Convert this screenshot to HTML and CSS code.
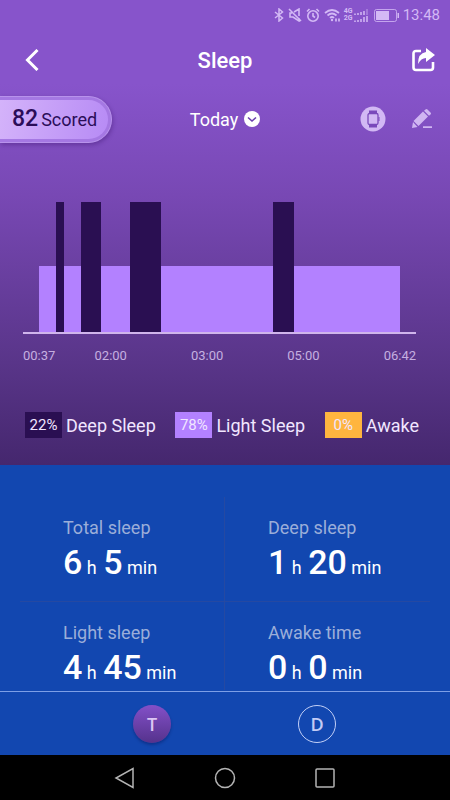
FILE: index.html
```html
<!DOCTYPE html>
<html lang="en">
<head>
    <meta charset="UTF-8">
    <meta name="viewport" content="width=device-width, initial-scale=1.0">
    <title>Sleep</title>
    <link rel="stylesheet" href="styles.css">
</head>
<body>
    <!-- Sleep summary -->
    <section class="summary">
        <div class="status-bar">
            <svg width="10" height="14" viewBox="0 0 10 14" fill="none" stroke="currentColor" stroke-width="1.5"><path d="M1 4l7.500 6L5 13V1l3.500 3L1 10"/></svg>
            <svg width="14" height="14" viewBox="0 0 14 14" fill="none" stroke="currentColor" stroke-width="1.6"><path d="M1 1l12 12M4 5H2v4h3l6 4v-3M6 4l5-3v7"/></svg>
            <svg width="14" height="14" viewBox="0 0 14 14" fill="none" stroke="currentColor" stroke-width="1.6"><circle cx="7" cy="8" r="5.2"/><path d="M7 5v3l2 1.5M1 3.5L3.5 1M13 3.5L10.500 1"/></svg>
            <svg width="16" height="14" viewBox="0 0 16 14" fill="none" stroke="currentColor" stroke-width="1.7"><path d="M1 5q7-6 14 0M3.500 7.500q4.500-4 9 0M6 10q2-2 4 0"/><circle cx="8" cy="12" r="1.200" fill="currentColor" stroke="none"/><path d="M12 10.500v3M15 10.500v3"/></svg>
            <div class="signals">
                <div class="signal">4G<svg width="14" height="6" viewBox="0 0 14 6" fill="none" stroke="currentColor" stroke-width="1.5"><path d="M1 6V4.500M4 6V4M7 6V3M10 6V2"/><path d="M13 6V0" opacity=".5"/></svg></div>
                <div class="signal">2G<svg width="14" height="6" viewBox="0 0 14 6" fill="none" stroke="currentColor" stroke-width="1.5"><path d="M1 6V4.500M4 6V4M7 6V3M10 6V1M13 6V0"/></svg></div>
            </div>
            <svg width="25" height="13" viewBox="0 0 25 13"><rect x=".5" y=".5" width="22" height="12" rx="2" fill="none" stroke="currentColor" opacity=".8"/><rect x="2" y="2" width="13" height="9" fill="currentColor"/><rect x="23.500" y="4" width="1.500" height="5" fill="currentColor"/></svg>
            <span class="clock">13:48</span>
        </div>

        <header class="header">
            <button class="icon-btn" aria-label="Back">
                <svg width="14" height="22" viewBox="0 0 14 22" fill="none" stroke="currentColor" stroke-width="3"><path d="M12.500 1L2.500 11l10 10"/></svg>
            </button>
            <h1>Sleep</h1>
            <button class="icon-btn" aria-label="Share">
                <svg width="24" height="24" viewBox="0 0 24 24" fill="none" stroke="currentColor"><path d="M10 3H5Q2.500 3 2.500 5.500v14q0 2.500 2.500 2.500h14.500q2.500 0 2.500-2.500V14" stroke-width="2.600"/><path d="M15 0l9 7-9 7v-4q-5 0-8 6 0-11 8-12z" fill="currentColor" stroke="none"/></svg>
            </button>
        </header>

        <div class="toolbar">
            <div class="score"><div class="score-inner"><strong>82</strong>Scored</div></div>
            <button class="day-btn">
                Today
                <svg width="16" height="16" viewBox="0 0 16 16"><circle cx="8" cy="8" r="8" fill="#fff"/><path d="M4 6.500l4 3.500 4-3.500" fill="none" stroke="#6b3fae" stroke-width="1.6"/></svg>
            </button>
            <div class="tools">
                <button class="icon-btn" aria-label="Watch">
                    <svg width="26" height="26" viewBox="0 0 26 26"><circle cx="13" cy="13" r="12.500" fill="#d2b8f4"/><path d="M9 4.500h8V8H9zM9 18h8v3.500H9z" fill="#7a4abb"/><rect x="8" y="7.500" width="10" height="11" rx="1.500" fill="#d2b8f4" stroke="#7a4abb" stroke-width="1.300"/><path d="M19 11v4" stroke="#7a4abb"/></svg>
                </button>
                <button class="icon-btn" aria-label="Edit">
                    <svg width="20" height="20" viewBox="0 0 20 20" fill="#d0b5f2"><path d="M0 19l1-6 4.500 5zM1.500 12L11 2.500l5 5L6.500 17zM12 1.800L13.500.5q1-1 2 0L18.500 3.500q1 1 0 2L17 6.800zM11 17.300h9V19h-9z"/></svg>
                </button>
            </div>
        </div>

        <!-- Segment widths are minutes of the night -->
        <div class="chart">
            <div class="plot">
                <div class="segment light" style="flex-grow: 17"></div>
                <div class="segment deep" style="flex-grow: 8"></div>
                <div class="segment light" style="flex-grow: 17"></div>
                <div class="segment deep" style="flex-grow: 20"></div>
                <div class="segment light" style="flex-grow: 29"></div>
                <div class="segment deep" style="flex-grow: 31"></div>
                <div class="segment light" style="flex-grow: 113"></div>
                <div class="segment deep" style="flex-grow: 21"></div>
                <div class="segment light" style="flex-grow: 106"></div>
            </div>
            <div class="times">
                <span>00:37</span>
                <span>02:00</span>
                <span>03:00</span>
                <span>05:00</span>
                <span>06:42</span>
            </div>
        </div>

        <ul class="legend">
            <li><span class="swatch deep">22%</span>Deep Sleep</li>
            <li><span class="swatch light">78%</span>Light Sleep</li>
            <li><span class="swatch awake">0%</span>Awake</li>
        </ul>
    </section>

    <!-- Totals -->
    <section class="totals">
        <div class="total">
            <h2>Total sleep</h2>
            <p><b>6</b> h <b>5</b> min</p>
        </div>
        <div class="total">
            <h2>Deep sleep</h2>
            <p><b>1</b> h <b>20</b> min</p>
        </div>
        <div class="total">
            <h2>Light sleep</h2>
            <p><b>4</b> h <b>45</b> min</p>
        </div>
        <div class="total">
            <h2>Awake time</h2>
            <p><b>0</b> h <b>0</b> min</p>
        </div>
    </section>

    <nav class="tabs">
        <button class="tab active">T</button>
        <button class="tab">D</button>
    </nav>

    <nav class="system-nav">
        <button class="icon-btn" aria-label="Back"><svg width="22" height="22" viewBox="0 0 22 22"><path d="M19 1.500v19L2 11z"/></svg></button>
        <button class="icon-btn" aria-label="Home"><svg width="22" height="22" viewBox="0 0 22 22"><circle cx="11" cy="11" r="9.500"/></svg></button>
        <button class="icon-btn" aria-label="Recent apps"><svg width="22" height="22" viewBox="0 0 22 22"><rect x="2" y="2" width="18" height="18" rx="1"/></svg></button>
    </nav>
</body>
</html>
```
FILE: styles.css
```css
* {
    margin: 0;
    padding: 0;
    box-sizing: border-box;
}

body {
    display: flex;
    flex-direction: column;
    min-height: 100vh;
    font-family: Roboto, "Liberation Sans", sans-serif;
    font-size: 18px;
    color: #fff;
    background: #1247b0;
}

button {
    font: inherit;
    color: inherit;
    background: none;
    border: none;
    cursor: pointer;
}

svg {
    display: block;
}

.icon-btn {
    display: flex;
}

.summary {
    background: linear-gradient(#8754cb 0, #8754cb 18%, #7848b4 42%, #593589 78%, #45276e 100%);
}

/* Status bar */
.status-bar {
    display: flex;
    align-items: center;
    justify-content: flex-end;
    gap: 4px;
    height: 30px;
    padding-right: 10px;
    color: #d3b9f5;
}

.signals {
    margin-right: 2px;
}

.signal {
    display: flex;
    align-items: center;
    gap: 1px;
    font-size: 7px;
    font-weight: bold;
    line-height: 7px;
}

.clock {
    font-size: 15px;
}

/* Header */
.header {
    display: flex;
    align-items: center;
    justify-content: space-between;
    height: 60px;
    padding: 0 15px 0 25px;
}

.header h1 {
    font-size: 22px;
    font-weight: 500;
}

/* Score, day and tools */
.toolbar {
    display: grid;
    grid-template-columns: 1fr auto 1fr;
    align-items: center;
    height: 58px;
}

.score {
    justify-self: start;
    padding: 3px 3px 3px 0;
    background: #a578e3;
    border: 1px solid #b892ec;
    border-left: none;
    border-radius: 0 24px 24px 0;
    box-shadow: 1px 2px 4px rgba(60, 20, 110, 0.4);
}

.score-inner {
    display: flex;
    align-items: baseline;
    gap: 3px;
    padding: 0 11px 0 12px;
    line-height: 38px;
    color: #2b0d59;
    background: linear-gradient(100deg, #d4b3fa, #b78bf5);
    border-radius: 0 20px 20px 0;
}

.score strong {
    font-size: 23px;
    font-weight: 500;
}

.day-btn {
    display: flex;
    align-items: center;
    gap: 6px;
}

.tools {
    display: flex;
    align-items: center;
    justify-content: flex-end;
    gap: 26px;
    padding-right: 18px;
}

/* Chart */
.chart {
    padding: 54px 34px 0 23px;
}

.plot {
    display: flex;
    align-items: flex-end;
    height: 132px;
    padding: 0 16px;
    border-bottom: 2px solid #d0b5ec;
}

.segment {
    flex: 0 1 0;
}

.segment.light {
    height: 66px;
}

.segment.deep {
    height: 130px;
}

.deep {
    background: #2a0f52;
}

.light {
    background: #b381ff;
}

.awake {
    background: #ffb53f;
}

.times {
    display: grid;
    grid-template-columns: 72fr 97fr 97fr 97fr 30fr;
    padding-top: 13px;
    font-size: 13px;
    line-height: 18px;
    color: #c5afe0;
}

/* Legend */
.legend {
    display: flex;
    justify-content: space-between;
    padding: 47px 31px 27px 25px;
    list-style: none;
}

.legend li {
    display: flex;
    align-items: center;
    gap: 4px;
    color: #f1e6ff;
}

.swatch {
    width: 37px;
    font-size: 15px;
    line-height: 26px;
    text-align: center;
}

/* Totals */
.totals {
    flex: 1;
    display: grid;
    grid-template-columns: 1fr 1fr;
    align-content: start;
    padding: 32px 20px 0;
}

.total {
    height: 105px;
    padding: 19px 0 0 43px;
    border-bottom: 1px solid #2549a2;
}

.total:nth-child(odd) {
    border-right: 1px solid #2549a2;
}

.total:nth-child(n+3) {
    height: 88px;
    border-bottom: none;
}

.total h2 {
    font-size: 18px;
    font-weight: normal;
    line-height: 24px;
    color: #9baed9;
}

.total p {
    line-height: 44px;
}

.total b {
    font-size: 34px;
    font-weight: 500;
}

.total b + b {
    margin-left: 2px;
}

/* Tabs */
.tabs {
    display: flex;
    justify-content: center;
    align-items: center;
    gap: 127px;
    height: 64px;
    padding-left: 19px;
    border-top: 1px solid #7d9fe6;
}

.tab {
    width: 38px;
    height: 38px;
    font-family: "Open Sans", sans-serif;
    font-weight: 600;
    color: #c3cbf5;
    border: 1px solid #c3d0f7;
    border-radius: 50%;
}

.tab.active {
    color: #dcc6f5;
    background: linear-gradient(#8350c8, #55328c);
    border: none;
    box-shadow: 0 2px 3px rgba(0, 0, 60, 0.3);
}

/* Android navigation */
.system-nav {
    display: flex;
    justify-content: center;
    align-items: center;
    gap: 78px;
    height: 45px;
    background: #000;
}

.system-nav svg {
    fill: none;
    stroke: #b4b4b4;
    stroke-width: 1.5;
}
```
